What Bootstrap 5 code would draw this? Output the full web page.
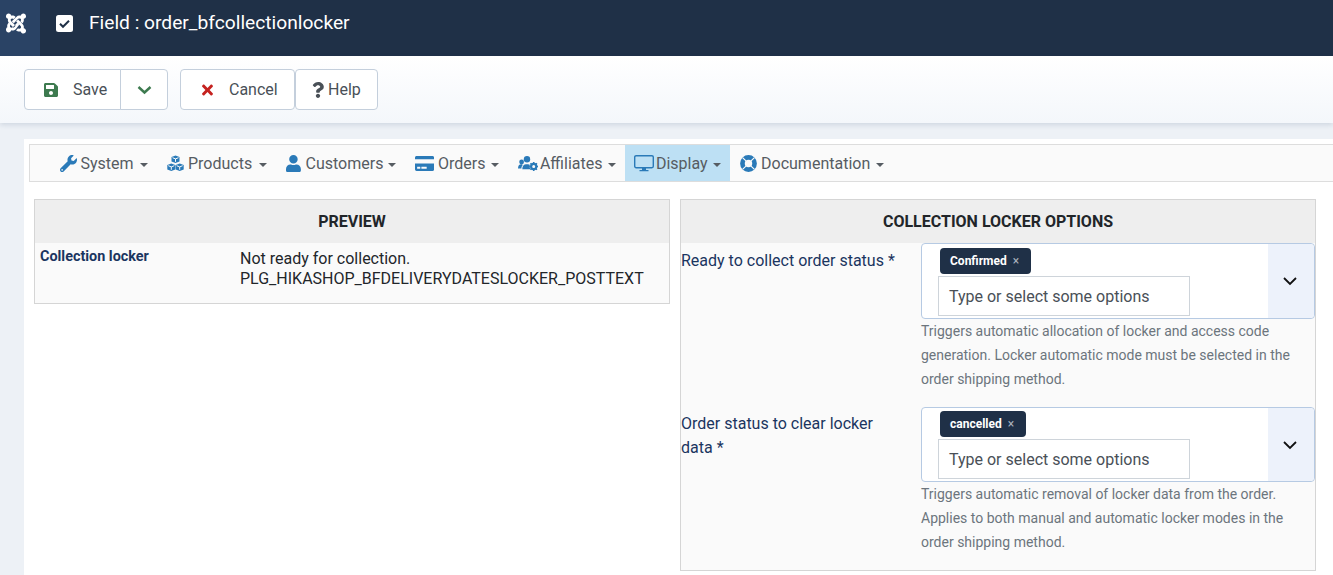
<!DOCTYPE html>
<html lang="en">
<head>
<meta charset="utf-8">
<title>Field</title>
<link href="https://cdn.jsdelivr.net/npm/bootstrap@5.3.0/dist/css/bootstrap.min.css" rel="stylesheet">
<style>
html,body{height:575px;overflow:hidden}
body{font-family:Roboto,"Liberation Sans",sans-serif;background:#edf1f6;font-size:16px;color:#22262a}
.top-head{height:56px;background:#1f3047;color:#fff}
.logo-cell{width:40px;height:56px;background:#2a4365;padding-right:8px}
.logo-cell svg{width:22px;height:23px;margin-top:-10px}
.check-ico{width:17px;height:17px;margin:-9px 16px 0 16px}
.head-title{font-size:19.2px;line-height:1;margin-top:-10px}
.tool-zone{height:67px;padding:13px 24px 0;background:linear-gradient(#fff,#f4f7fb);box-shadow:0 2px 5px rgba(30,60,100,.14)}
.tb{height:41px;background:#fff;border:1px solid #c4cfdc;color:#495057;display:flex;align-items:center;font-size:16px;border-radius:4px}
.tb-save{width:97px;padding-left:19px;border-radius:4px 0 0 4px}
.tb-drop{width:48px;margin-left:-1px;border-radius:0 4px 4px 0;justify-content:center}
.tb-cancel{width:115px;margin-left:12px;padding-left:20px}
.tb-help{width:83px;padding-left:16px}
.gap-save{margin-left:15px}
.work{margin:16px 0 0 24px;background:#fff;height:440px;padding:5px 0 0 5px}
.menu-bar{height:38px;background:#fafafa;border:1px solid #ddd;border-right:0;padding-left:20px}
.mi{height:36px;color:#565c62;padding:0 9.5px;line-height:37px;white-space:nowrap}
.mi svg{height:17px;fill:#2a7ab8;vertical-align:-3px}
.mi.act{background:#bde0f4;padding:0 8.5px}
.mi .ico-gap{margin-right:2px}
.mi .ico-tight{margin-right:1px}
.mi .ico-ring{margin-left:1px}
.caret-mark{display:inline-block;border-top:4.5px solid #565c62;border-left:4.5px solid transparent;border-right:4.5px solid transparent;margin-left:1.5px;vertical-align:2px}
.caret-wide{margin-left:2.5px}
.caret-thin{margin-left:.5px}
.panes{margin:17px 0 0 5px;gap:10px}
.pane{width:636px;background:#fafafa;border:1px solid #d5d5d5}
.pane-head{height:43px;background:#eee;font-weight:700;font-size:16px;line-height:44px;text-align:center;color:#212529}
.pv-key{width:205px;padding:1px 0 0 5px;font-weight:700;font-size:14.4px;line-height:26px;color:#1a3560}
.pv-val{line-height:20px;padding:6px 0 14px}
.fld{color:#1a3560;width:240px;line-height:24px;padding-top:5px}
.first-row .fld{padding-top:6px}
.sel{width:394px;height:76px;background:#fff;border:1px solid #b6cae3;border-radius:4px}
.sel-main{padding:4px 0 0 16px;width:347px}
.chip{display:block;width:max-content;height:26px;background:#1f3047;color:#fff;border-radius:4px;font-size:12px;font-weight:700;line-height:26px;padding:0 12px 0 10px;margin-left:2px}
.chip i{font-style:normal;font-weight:400;color:#aab2bd;margin-left:3px}
.type-box{width:252px;height:40px;border:1px solid #ced4da;padding:0 10px;line-height:39px;color:#495057;margin-top:2px}
.sel-arrow{width:46px;background:#edf2fb;border-radius:0 4px 4px 0;padding-right:2px}
.sel-arrow svg{width:16px;height:16px}
.hint{font-size:14px;line-height:24px;color:#6c757d;margin:0}
.second-row{margin-top:16px}
.second-row .sel{height:75px}
.second-row .sel-main{padding-top:3px}
.right-pane{height:372px}
</style>
</head>
<body>
<header class="top-head d-flex align-items-center">
  <div class="logo-cell d-flex align-items-center justify-content-center">
    <svg viewBox="0 0 448 512" fill="#fff"><path d="M.6 92.1C.6 58.8 27.4 32 60.4 32c30 0 54.5 21.9 59.2 50.2 32.6-7.6 67.1.6 96.5 30l-44.3 44.3c-20.5-20.5-42.6-16.3-55.4-3.5-14.3 14.3-14.3 37.9 0 52.2l99.5 99.5-44 44.3c-87.7-87.2-49.7-49.7-99.8-99.7-26.8-26.5-35-64.8-24.8-98.9C20.4 144.6.6 120.7.6 92.1zm129.5 116.4l44.3 44.3c10-10 89.7-89.7 99.7-99.8 14.3-14.3 37.6-14.3 51.9 0 12.8 12.8 17 35-3.5 55.4l44 44.3c31.2-31.2 38.5-67.6 28.9-101.2 29.2-4.1 51.9-29.2 51.9-59.5 0-33.2-26.8-60.1-59.8-60.1-30.3 0-55.4 22.5-59.5 51.6-33.8-9.9-71.7-1.5-98.3 25.1-18.3 19.1-71.1 71.5-99.6 99.9zm266.3 152.2c8.2-32.7-.9-68.5-26.3-93.9-11.8-12.2 5 4.7-99.5-99.7l-44.3 44.3 99.7 99.7c14.3 14.3 14.3 37.6 0 51.9-12.8 12.8-35 17-55.4-3.5l-44 44.3c27.6 30.2 68 38.8 102.7 28 5.5 27.4 29.7 48.1 58.9 48.1 33 0 59.8-26.8 59.8-60.1 0-30.2-22.5-55-51.6-58.9zM296 282.6l-44.3-44.3c-9.9 10-89.7 89.7-99.7 99.8-14.3 14.3-37.6 14.3-51.9 0-13.1-13.1-16.9-35.3 3.5-55.4l-44.3-44.3c-26.5 26.5-38 65-28 98.5C12.7 341.6.6 366 .6 394c0 33 27 60 60 60 28.6 0 52.5-19.8 58.3-47 34 9.7 72.3 1 99-25.7z"/></svg>
  </div>
  <svg class="check-ico" viewBox="0 0 17 17"><rect width="17" height="17" rx="2.5" fill="#fff"/><path d="M4 8.8l3 3 6-6" fill="none" stroke="#1f3047" stroke-width="2"/></svg>
  <div class="head-title">Field : order_bfcollectionlocker</div>
</header>
<div class="tool-zone d-flex align-items-start">
  <div class="tb tb-save"><svg width="14" height="16" viewBox="0 0 448 512" fill="#3d7a4f"><path d="M433.941 129.941l-83.882-83.882A48 48 0 0 0 316.118 32H48C21.49 32 0 53.49 0 80v352c0 26.51 21.49 48 48 48h352c26.51 0 48-21.49 48-48V163.882a48 48 0 0 0-14.059-33.941zM224 416c-35.346 0-64-28.654-64-64 0-35.346 28.654-64 64-64s64 28.654 64 64c0 35.346-28.654 64-64 64zm96-304.52V212c0 6.627-5.373 12-12 12H76c-6.627 0-12-5.373-12-12V108c0-6.627 5.373-12 12-12h228.52c3.183 0 6.235 1.264 8.485 3.515l3.48 3.48A11.996 11.996 0 0 1 320 111.48z"/></svg><span class="gap-save">Save</span></div>
  <div class="tb tb-drop"><svg width="15" height="10" viewBox="0 0 15 10"><path d="M1.5 2l6 5.5 6-5.5" fill="none" stroke="#3d7a4f" stroke-width="2.4"/></svg></div>
  <div class="tb tb-cancel"><svg width="13" height="16" viewBox="0 0 352 512" fill="#c5221f"><path d="M242.72 256l100.07-100.07c12.28-12.28 12.28-32.19 0-44.48l-22.24-22.24c-12.28-12.28-32.19-12.28-44.48 0L176 189.28 75.93 89.21c-12.28-12.28-32.19-12.28-44.48 0L9.21 111.45c-12.28 12.28-12.28 32.19 0 44.48L109.28 256 9.21 356.07c-12.28 12.28-12.28 32.19 0 44.48l22.24 22.24c12.28 12.28 32.2 12.28 44.48 0L176 322.72l100.07 100.07c12.28 12.28 32.2 12.28 44.48 0l22.24-22.24c12.28-12.28 12.28-32.19 0-44.48L242.72 256z"/></svg><span class="gap-save">Cancel</span></div>
  <div class="tb tb-help"><svg width="12" height="16" viewBox="0 0 384 512" fill="#495057"><path d="M202.021 0C122.202 0 70.503 32.703 29.914 91.026c-7.363 10.58-5.093 25.086 5.178 32.874l43.138 32.709c10.373 7.865 25.132 6.026 33.253-4.148 25.049-31.381 43.63-49.449 82.757-49.449 30.764 0 68.816 19.799 68.816 49.631 0 22.552-18.617 34.134-48.993 51.164-35.423 19.86-82.299 44.576-82.299 106.405V320c0 13.255 10.745 24 24 24h72.471c13.255 0 24-10.745 24-24v-5.773c0-42.86 125.268-44.645 125.268-160.627C377.504 66.256 286.902 0 202.021 0zM192 373.459c-38.196 0-69.271 31.075-69.271 69.271 0 38.195 31.075 69.27 69.271 69.27s69.271-31.075 69.271-69.271-31.075-69.27-69.271-69.27z"/></svg><span class="ms-1">Help</span></div>
</div>
<div class="work">
  <nav class="menu-bar d-flex">
    <div class="mi"><svg viewBox="0 0 512 512"><path d="M507.73 109.1c-2.24-9.03-13.54-12.09-20.12-5.51l-74.36 74.36-67.88-11.31-11.31-67.88 74.36-74.36c6.62-6.62 3.43-17.9-5.66-20.16-47.38-11.74-99.55.91-136.58 37.93-39.64 39.64-50.55 97.1-34.05 147.2L18.74 402.76c-24.99 24.99-24.99 65.51 0 90.5 24.99 24.99 65.51 24.99 90.5 0l213.21-213.21c50.12 16.71 107.47 5.68 147.37-34.22 37.07-37.07 49.7-89.32 37.91-136.73zM64 472c-13.25 0-24-10.75-24-24 0-13.26 10.75-24 24-24s24 10.74 24 24c0 13.25-10.75 24-24 24z"/></svg> System <span class="caret-mark caret-wide"></span></div>
    <div class="mi"><svg viewBox="0 0 17 17"><path d="M8.5.6l4 1.5v4.3l-4 1.6-4-1.6V2.1zM4.3 8.6l4 1.5v4.3l-4 1.6L.3 14.4v-4.3zM12.7 8.6l4 1.5v4.3l-4 1.6-4-1.6v-4.3z" fill="#2a7ab8"/><path d="M5.5 2.7l3 1.2 3-1.2M8.5 3.9v2.9M1.3 10.7l3 1.2 3-1.2M4.3 11.9v2.9M9.7 10.7l3 1.2 3-1.2M12.7 11.9v2.9" stroke="#fafafa" stroke-width="1" fill="none"/></svg> Products <span class="caret-mark caret-wide"></span></div>
    <div class="mi"><svg class="ico-tight" viewBox="0 0 448 512"><path d="M224 256c70.7 0 128-57.3 128-128S294.7 0 224 0 96 57.3 96 128s57.3 128 128 128zm89.6 32h-16.7c-22.2 10.2-46.9 16-72.9 16s-50.6-5.8-72.9-16h-16.7C60.2 288 0 348.2 0 422.4V464c0 26.5 21.5 48 48 48h352c26.5 0 48-21.5 48-48v-41.6c0-74.2-60.2-134.4-134.4-134.4z"/></svg> Customers <span class="caret-mark caret-thin"></span></div>
    <div class="mi"><svg viewBox="0 0 576 512"><path d="M0 432c0 26.5 21.5 48 48 48h480c26.5 0 48-21.5 48-48V256H0v176zm192-68c0-6.6 5.4-12 12-12h136c6.6 0 12 5.4 12 12v40c0 6.6-5.4 12-12 12H204c-6.6 0-12-5.4-12-12v-40zm-128 0c0-6.6 5.4-12 12-12h72c6.6 0 12 5.4 12 12v40c0 6.6-5.4 12-12 12H76c-6.6 0-12-5.4-12-12v-40zM576 80v48H0V80c0-26.5 21.5-48 48-48h480c26.5 0 48 21.5 48 48z"/></svg> Orders <span class="caret-mark"></span></div>
    <div class="mi"><svg class="ico-gap" viewBox="0 0 20 17"><circle cx="3.6" cy="7" r="2.4"/><circle cx="9" cy="4.2" r="3.2"/><path d="M0 13.6c0-2.9 1.2-4.3 3.2-4.3.9 0 1.3.3 1.6.6-.9.9-1.4 2.2-1.4 3.7zM4.3 14.2c0-3.2 1.7-5 3.7-5h2c.7 0 1.3.2 1.8.5-.4 1.3-.2 3 .6 4.5H4.3z"/><circle cx="15.7" cy="11.5" r="2.6" fill="none" stroke="#2a7ab8" stroke-width="2.2"/><path d="M15.7 7v2M15.7 14v2M11.2 11.5h2M18.2 11.5h1.8M12.5 8.3l1.4 1.4M17.5 13.3l1.4 1.4M12.5 14.7l1.4-1.4M17.5 9.7l1.4-1.4" stroke="#2a7ab8" stroke-width="1.6"/></svg>Affiliates <span class="caret-mark"></span></div>
    <div class="mi act"><svg class="ico-gap" viewBox="0 0 20 17"><rect x=".7" y=".7" width="18.6" height="12" rx="1.4" fill="none" stroke="#2a7ab8" stroke-width="1.4"/><path d="M8 13h4v2H8zM5.5 15h9v1.2h-9z"/></svg>Display <span class="caret-mark"></span></div>
    <div class="mi"><svg class="ico-ring" viewBox="0 0 16 16"><circle cx="8" cy="8" r="5.7" fill="none" stroke="#2a7ab8" stroke-width="4.4"/><path d="M2.4 2.4l3.200 3.200M13.600 2.400l-3.200 3.200M2.400 13.600l3.200-3.200M13.600 13.600l-3.200-3.200" stroke="#fafafa" stroke-width="1.100"/></svg> Documentation <span class="caret-mark"></span></div>
  </nav>
  <div class="panes d-flex align-items-start">
    <section class="pane">
      <div class="pane-head">PREVIEW</div>
      <div class="d-flex">
        <div class="pv-key">Collection locker</div>
        <div class="pv-val">Not ready for collection.<br>PLG_HIKASHOP_BFDELIVERYDATESLOCKER_POSTTEXT</div>
      </div>
    </section>
    <section class="pane right-pane">
      <div class="pane-head">COLLECTION LOCKER OPTIONS</div>
      <div class="d-flex first-row">
        <div class="fld">Ready to collect order status *</div>
        <div>
          <div class="sel d-flex">
            <div class="sel-main"><span class="chip">Confirmed <i>×</i></span><div class="type-box">Type or select some options</div></div>
            <div class="sel-arrow flex-fill d-flex align-items-center justify-content-center"><svg viewBox="0 0 16 16"><path d="M2 5l6 6 6-6" fill="none" stroke="#111" stroke-width="1.8"/></svg></div>
          </div>
          <p class="hint">Triggers automatic allocation of locker and access code<br>generation. Locker automatic mode must be selected in the<br>order shipping method.</p>
        </div>
      </div>
      <div class="d-flex second-row">
        <div class="fld">Order status to clear locker<br>data *</div>
        <div>
          <div class="sel d-flex">
            <div class="sel-main"><span class="chip">cancelled <i>×</i></span><div class="type-box">Type or select some options</div></div>
            <div class="sel-arrow flex-fill d-flex align-items-center justify-content-center"><svg viewBox="0 0 16 16"><path d="M2 5l6 6 6-6" fill="none" stroke="#111" stroke-width="1.8"/></svg></div>
          </div>
          <p class="hint">Triggers automatic removal of locker data from the order.<br>Applies to both manual and automatic locker modes in the<br>order shipping method.</p>
        </div>
      </div>
    </section>
  </div>
</div>
<script src="https://cdn.jsdelivr.net/npm/bootstrap@5.3.0/dist/js/bootstrap.bundle.min.js"></script>
</body>
</html>
